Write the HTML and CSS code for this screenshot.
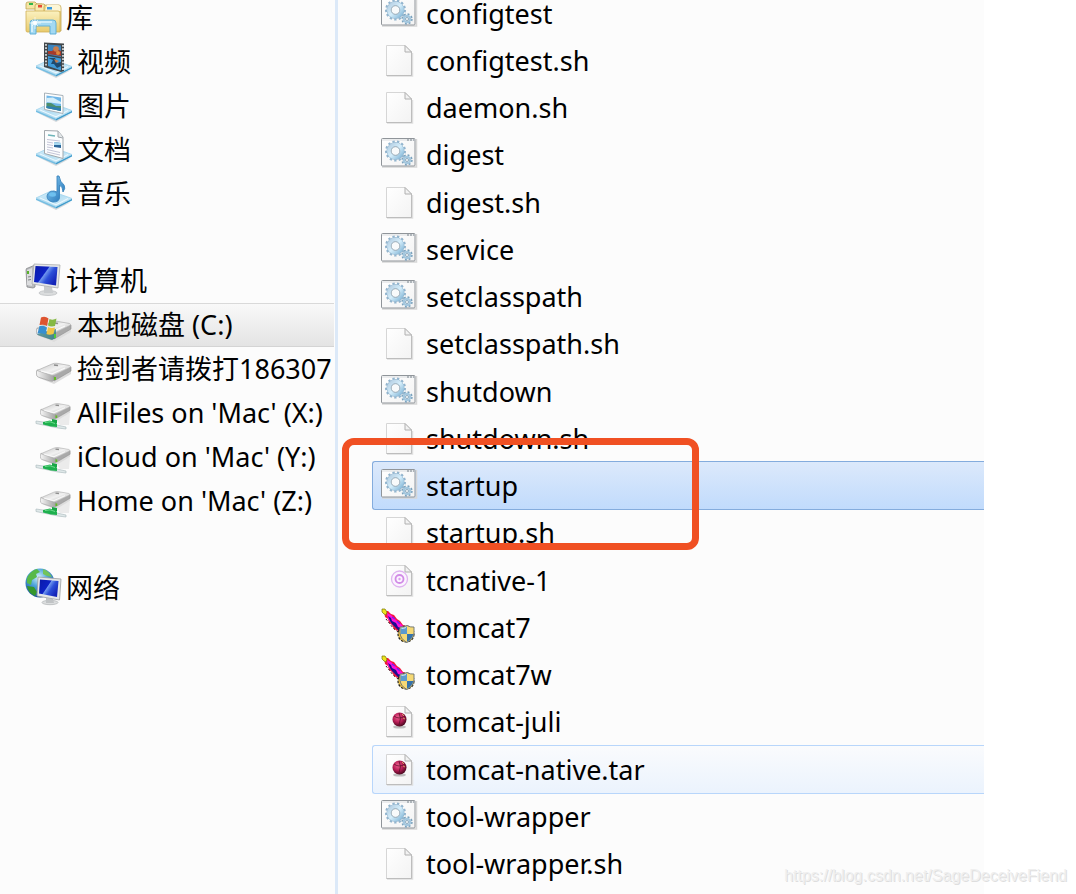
FILE: index.html
```html
<!DOCTYPE html>
<html lang="zh-CN">
    <head>
        <meta charset="utf-8">
        <title>bin</title>
        <link rel="stylesheet" href="styles.css">
    </head>
    <body>
        <!-- shared icon shapes -->
        <svg class="defs" aria-hidden="true">
            <defs>
                <linearGradient id="paper" x1="0" y1="0" x2="1" y2="1">
                    <stop offset="0" stop-color="#ffffff"/>
                    <stop offset="1" stop-color="#f3f3f3"/>
                </linearGradient>
                <linearGradient id="gearFill" x1="0" y1="0" x2="1" y2="1">
                    <stop offset="0" stop-color="#b5cfe3"/>
                    <stop offset="0.5" stop-color="#d5eefb"/>
                    <stop offset="1" stop-color="#86b8d8"/>
                </linearGradient>
                <linearGradient id="trayFill" x1="0" y1="0" x2="1" y2="1">
                    <stop offset="0" stop-color="#d9effa"/>
                    <stop offset="0.5" stop-color="#b4def3"/>
                    <stop offset="1" stop-color="#e3f5fc"/>
                </linearGradient>
                <linearGradient id="folderFill" x1="0" y1="0" x2="0" y2="1">
                    <stop offset="0" stop-color="#fbf1c0"/>
                    <stop offset="1" stop-color="#e9cb6c"/>
                </linearGradient>
                <linearGradient id="screenFill" x1="0" y1="0" x2="1" y2="0.6">
                    <stop offset="0" stop-color="#0a1aa8"/>
                    <stop offset="0.48" stop-color="#0d22c4"/>
                    <stop offset="0.52" stop-color="#6f95ee"/>
                    <stop offset="0.7" stop-color="#2c4fd8"/>
                    <stop offset="1" stop-color="#1424b8"/>
                </linearGradient>
                <linearGradient id="metalTop" x1="0" y1="0" x2="1" y2="1">
                    <stop offset="0" stop-color="#c4c4c4"/>
                    <stop offset="0.5" stop-color="#f1f1f1"/>
                    <stop offset="1" stop-color="#adadad"/>
                </linearGradient>
                <linearGradient id="metalSide" x1="0" y1="0" x2="1" y2="0">
                    <stop offset="0" stop-color="#f6f6f6"/>
                    <stop offset="1" stop-color="#a2a2a2"/>
                </linearGradient>
                <linearGradient id="noteFill" x1="0" y1="0" x2="1" y2="1">
                    <stop offset="0" stop-color="#8fd0f5"/>
                    <stop offset="1" stop-color="#1c6fb5"/>
                </linearGradient>
                <radialGradient id="globeFill" cx="0.45" cy="0.3" r="0.7">
                    <stop offset="0" stop-color="#d5f3fb"/>
                    <stop offset="0.45" stop-color="#4da3d9"/>
                    <stop offset="1" stop-color="#174f9e"/>
                </radialGradient>
                <radialGradient id="ballFill" cx="0.4" cy="0.35" r="0.7">
                    <stop offset="0" stop-color="#ee5f90"/>
                    <stop offset="0.5" stop-color="#b81d56"/>
                    <stop offset="1" stop-color="#3d0719"/>
                </radialGradient>
            </defs>

            <symbol id="page" viewBox="0 0 36 36">
                <path d="M6 35H31.500V12" fill="none" stroke="#dedede" stroke-width="1.5"/>
                <path d="M5.500 4.500H24L30.500 11V34.500H5.500Z" fill="url(#paper)" stroke="#d6d6d6"/>
                <path d="M30.500 11V34.500H5.500" fill="none" stroke="#bdbdbd"/>
                <path d="M24 4.500V11H30.500Z" fill="#f2f2f2" stroke="#b0b0b0"/>
            </symbol>

            <symbol id="batch" viewBox="0 0 36 36">
                <path d="M1 32H35.500V4" fill="none" stroke="#d6d6d6" stroke-width="1.500"/>
                <rect x="0.500" y="3.500" width="33.500" height="27.500" rx="1" fill="url(#paper)" stroke="#90959a"/>
                <path d="M1 5H34" stroke="#d9dcdf"/>
                <path d="M26 5h2M29 5h2M32 5h1.500" stroke="#76818a"/>
                <circle cx="14.500" cy="16" r="9.300" fill="none" stroke="#93b5ce" stroke-width="2.400" stroke-dasharray="2.300 2.200"/>
                <circle cx="14.500" cy="16" r="6.500" fill="none" stroke="#93b5ce" stroke-width="5"/>
                <circle cx="14.500" cy="16" r="6.500" fill="none" stroke="url(#gearFill)" stroke-width="4"/>
                <circle cx="14.500" cy="16" r="4.300" fill="#f8fafb" stroke="#9aaab6" stroke-width="0.900"/>
                <circle cx="26" cy="25" r="4.800" fill="none" stroke="#7ba2bd" stroke-width="1.800" stroke-dasharray="1.900 1.870"/>
                <circle cx="26" cy="25" r="3.200" fill="#f7fbfe" stroke="#a4c7de" stroke-width="2.300"/>
                <circle cx="26" cy="25" r="1.500" fill="#ffffff" stroke="#7397ae" stroke-width="0.800"/>
            </symbol>

            <symbol id="dll" viewBox="0 0 36 36">
                <use href="#page"/>
                <circle cx="18.500" cy="18" r="8" fill="#fbf4fe" stroke="#dfb3f0" stroke-width="1.300"/>
                <circle cx="18.500" cy="18" r="4" fill="none" stroke="#d18be6" stroke-width="1.800"/>
                <circle cx="18.500" cy="18" r="1.200" fill="#dba0ee"/>
            </symbol>

            <symbol id="jar" viewBox="0 0 36 36">
                <use href="#page"/>
                <ellipse cx="18.500" cy="25" rx="6.500" ry="1.600" fill="#bdbdbd"/>
                <circle cx="18.500" cy="17.500" r="7" fill="url(#ballFill)"/>
                <path d="M13 14Q18 18 24 14M18 11Q21 16 18 23" fill="none" stroke="#5b1029" stroke-width="0.800"/>
                <path d="M21 12l2 2M22 16l2 1" stroke="#d99a62"/>
            </symbol>

            <symbol id="feather" viewBox="0 0 36 36">
                <path d="M3 3L7 3L10 6L13 7L16 11L19 13L22 17L25 18L26 25L19 27L17 23L13 21L11 17L8 15L7 11L4 9Z" fill="#f5173c"/>
                <path d="M6 5L10 7L15 12L19 15L24 20L21 24L16 20L11 16L7 11Z" fill="#ff0edb"/>
                <path d="M7 8L10 10L11 13L15 15L17 19L20 20L22 24L18 23L15 20L11 16L9 13Z" fill="#1d0c8e"/>
                <path d="M11 9L14 11M16 13L19 16" stroke="#7c1bf2" stroke-width="1.500"/>
                <path d="M5 11L9 16L12 20L17 24" fill="none" stroke="#31121e" stroke-width="1" stroke-dasharray="2 2"/>
                <path d="M1 1H4L6 4L5 7L3 6L1 4Z" fill="#ece41c" stroke="#77720a" stroke-width="0.700"/>
                <circle cx="25" cy="26" r="8" fill="#e9bf45" stroke="#26261c" stroke-width="1.200" stroke-dasharray="2.500 1.300"/>
                <path d="M26 17.500Q29.500 19.500 33 19V25Q32.500 31 26 34.500Q19.500 31 19 25V19Q22.500 19.500 26 17.500Z" fill="#f6d975" stroke="#6a7274" stroke-width="0.900"/>
                <path d="M26 18.500V26H19.600V19.800Q23 20 26 18.500Z" fill="#5c9ace"/>
                <path d="M26 26H32.300Q31.500 31 26 33.700Z" fill="#3572ab"/>
                <path d="M20.500 20.500Q23 20.500 25 19.500" fill="none" stroke="#cbe4f5"/>
            </symbol>

            <symbol id="tray" viewBox="0 0 36 36">
                <path d="M2 25L20 34L35 26L20 31Z" fill="#d4d8db"/>
                <path d="M0 22L20 30.500V32.500L0 24Z" fill="#74bde2"/>
                <path d="M20 30.500L36 22.500V24.500L20 32.500Z" fill="#3f9bcb"/>
                <path d="M0 22L15 15L36 22.500L20 30.500Z" fill="url(#trayFill)" stroke="#9fd3ec" stroke-width="0.800"/>
                <path d="M4 22L20 28.800L32 22.500" fill="none" stroke="#eef9ff"/>
            </symbol>

            <symbol id="libraries" viewBox="0 0 36 36">
                <path d="M1 4Q1 2 3 2H10L12 4H17V9H1Z" fill="#f5e5a3" stroke="#bfa252" stroke-width="0.800"/>
                <path d="M10 6Q10 4 12 4H19L21 6H27V12H10Z" fill="#f8eab0" stroke="#bfa252" stroke-width="0.800"/>
                <path d="M19 7Q19 5 21 5H34Q36 5 36 8V31H19Z" fill="#efd989" stroke="#bfa252" stroke-width="0.800"/>
                <path d="M22 5H33Q35.500 5 35.500 8V11H20Z" fill="#fdf6d6"/>
                <rect x="4" y="3" width="4" height="2" fill="#2eb64c"/>
                <rect x="13" y="5" width="4" height="2.500" fill="#e84a35"/>
                <rect x="22" y="7" width="5" height="2.500" fill="#3a9be0"/>
                <path d="M1 11H33Q35 11 35 13V32H2Q1 32 1 30Z" fill="url(#folderFill)" stroke="#cfae56" stroke-width="0.800"/>
                <path d="M5 34V23Q5 20 8 20H28Q31 20 31 23V34H25V26H11V34Z" fill="#a3d9f2" stroke="#5aacd5" stroke-width="0.900"/>
                <path d="M7 32V23.500Q7 22 9 22H27" fill="none" stroke="#def4fd" stroke-width="1.600"/>
                <path d="M10 17V29M4 23H16M7 20L13 26M7 26L13 20" stroke="#ffffff" stroke-width="0.900" opacity="0.700"/>
                <circle cx="10" cy="23" r="2" fill="#ffffff"/>
            </symbol>

            <symbol id="video" viewBox="0 0 36 36">
                <use href="#tray"/>
                <path d="M8 -1.500L28 -0.500V27L25 28L8 23Z" fill="#41474b"/>
                <path d="M12 0.500L25 1.500V13L12 10.500Z" fill="#3d84bd"/>
                <path d="M12 12L25 14.500V26.500L12 22Z" fill="#3f9ad8"/>
                <path d="M12 7L16 7L19 4L25 7V12L12 10Z" fill="#a63b2c"/>
                <circle cx="20" cy="5" r="2.800" fill="#c97c4a"/>
                <circle cx="22" cy="9" r="2" fill="#e08a3c"/>
                <path d="M12 14L17 16L15 20L18 20L21 24L25 22V18L21 19L19 14Z" fill="#1f4a6e"/>
                <path d="M18 15L23 17L20 19Z" fill="#c97c4a"/>
                <path d="M10 0V23M27 1V27" stroke="#f4f6f6" stroke-width="1.500" stroke-dasharray="1.800 1.500"/>
            </symbol>

            <symbol id="pictures" viewBox="0 0 36 36">
                <use href="#tray"/>
                <path d="M8.500 5L27 7.500V25.500L8.500 21.500Z" fill="#fcfdfe" stroke="#a8b2b9"/>
                <path d="M10.500 7.500L25 9.500V23L10.500 20Z" fill="#6fb6e8"/>
                <path d="M10.500 10L17 9.500L25 14V16L10.500 14Z" fill="#d4eefa"/>
                <path d="M10.500 15L15 15L20 18L25 18V23L10.500 20Z" fill="#4c8f6c"/>
                <path d="M10.500 18L18 19L25 20V23L10.500 20Z" fill="#2f7fb2"/>
            </symbol>

            <symbol id="documents" viewBox="0 0 36 36">
                <use href="#tray"/>
                <path d="M8.500 -1.500L22 -1L27 5V26.500L8.500 21.500Z" fill="#fcfdfe" stroke="#a2a8ad"/>
                <path d="M22 -1V5L27 6" fill="#e3e7e9" stroke="#a2a8ad"/>
                <path d="M12 3L19 4" stroke="#6fb5b9" stroke-width="1.500"/>
                <path d="M11 7.500L24 9M11 10L17 11M11 12.500L17 13.500M11 15L17 16M11 17.500L24 20.500M11 20L24 23" stroke="#c4c5d8" stroke-width="1"/>
                <path d="M18 10L25 11V16L18 15Z" fill="#2c679a"/>
                <path d="M18 10L25 11V13L18 13Z" fill="#a8d9ef"/>
            </symbol>

            <symbol id="music" viewBox="0 0 36 36">
                <use href="#tray"/>
                <path d="M21 0H23Q24 6 28 9Q30 12 27 16Q27 11 23.500 9V22Q23 26 17 26Q11 25 11 20Q12 15 18 15L21 16Z" fill="url(#noteFill)" stroke="#3a85bd" stroke-width="0.900"/>
                <ellipse cx="16.500" cy="18.500" rx="3.500" ry="2.200" fill="#6ec0ef"/>
            </symbol>

            <symbol id="computer" viewBox="0 0 36 36">
                <path d="M1 7Q1 5 3 5L10 2V24L8 25L2 24Z" fill="#b9bbbd" stroke="#85878a" stroke-width="0.800"/>
                <path d="M2 7L7 5V23L2 22Z" fill="#dcdddf"/>
                <path d="M3 14L6 13.500M3 17L6 16.500" stroke="#7f8486"/>
                <rect x="2" y="8" width="2" height="3" fill="#59b32b"/>
                <ellipse cx="23" cy="30" rx="9" ry="2.500" fill="#dadcdd" stroke="#b9bcbe" stroke-width="0.700"/>
                <path d="M19 23L27 24L28 30H19Z" fill="#c9ccce"/>
                <path d="M9 1L35 2L33 25L7 21Z" fill="#e4e6e7" stroke="#a9acaf" stroke-width="0.800"/>
                <path d="M10.500 3L32.500 4L31 22.500L9 19Z" fill="url(#screenFill)"/>
            </symbol>

            <symbol id="drive" viewBox="0 0 36 36">
                <path d="M3 27L18 33L35 23V20Z" fill="#dddddd"/>
                <path d="M0.500 20Q0.500 19 2 19L18 24V29Q17 31 14 30L2 26Q0.500 25.500 0.500 23Z" fill="url(#metalSide)" stroke="#a0a0a0" stroke-width="0.700"/>
                <path d="M18 24L35 16V20L18 30Z" fill="#a9a9a9" stroke="#8f8f8f" stroke-width="0.600"/>
                <path d="M1 19.500L16 13Q18 12 21 12.300L33.500 14.500Q35.500 15.300 34 16.500L19 24Q17 25 15 24.200Z" fill="url(#metalTop)" stroke="#adadad" stroke-width="0.700"/>
                <path d="M5 20L16 22.800L29 17" fill="none" stroke="#fafafa" stroke-width="1.200"/>
                <path d="M18 14l4 0.500" stroke="#8c8c8c" stroke-width="1.500"/>
                <rect x="18" y="26" width="2" height="3" fill="#62bd23"/>
            </symbol>

            <symbol id="systemDrive" viewBox="0 0 36 36">
                <use href="#drive" y="2"/>
                <path d="M1 27L12 24L20 22V31L16 33L2 28Z" fill="#2b7c84" opacity="0.750"/>
                <path d="M5 10.500Q9 8.500 12.500 11.500L11 19Q8 17 3.500 18Z" fill="#dd5430"/>
                <path d="M13.500 12Q17 13.500 20.500 11.500L19 19Q15 20 12 18.500Z" fill="#86b944"/>
                <path d="M3.500 19Q8 18 11 20.500L9.500 27.500Q6 25.500 1.500 26.500Z" fill="#378fd0"/>
                <path d="M12 20Q15 21.500 19 20.500L17.500 27Q13 28.500 10.500 27Z" fill="#f2c546"/>
                <rect x="18" y="27" width="2" height="4" fill="#4fcb3b"/>
            </symbol>

            <symbol id="netDrive" viewBox="0 0 36 36">
                <path d="M20 24L34 18L33 30L24 30Z" fill="#ebebeb"/>
                <svg x="4" y="-2" width="31" height="31" viewBox="0 0 36 36"><use href="#drive"/></svg>
                <path d="M16 24L21 25V28L16 28Z" fill="#18a647"/>
                <path d="M0 26L7 27L30 32V34L22 33L0 28.500Z" fill="#dfe8e9" stroke="#b0bfc1" stroke-width="0.700"/>
                <path d="M7 27L14 25.500L21 28.500V32L15 31.500L7 29.500Z" fill="#1eb04e"/>
                <path d="M9 27.500L14 26.800L19 28.500" fill="none" stroke="#6cd98b"/>
            </symbol>

            <symbol id="network" viewBox="0 0 36 36">
                <circle cx="15" cy="13" r="14.500" fill="url(#globeFill)"/>
                <path d="M3 6Q7 0 12 -1L15 2L11 4L12 7L7 10L6 15L2 13Q1 9 3 6Z" fill="#58b948"/>
                <path d="M18 -1Q24 1 27 7L22 6L18 4Z" fill="#73c45a"/>
                <path d="M2 16L9 17L12 22L10 26Q3 23 2 16Z" fill="#35962c"/>
                <ellipse cx="25" cy="32.500" rx="8" ry="2.200" fill="#dcdedf" stroke="#aeb1b3" stroke-width="0.700"/>
                <path d="M21 28L28 29L29 33H21Z" fill="#c0c3c5"/>
                <path d="M13 7L36 9L34.500 30L12 26Z" fill="#e5e7e8" stroke="#9a9ea1" stroke-width="0.800"/>
                <path d="M15 9.500L33.500 11L32 27L14 23.500Z" fill="url(#screenFill)"/>
            </symbol>
        </svg>

        <div class="explorer">
            <nav class="sidebar">
                <ul class="tree">
                    <li><a href="#"><svg class="icon"><use href="#libraries"/></svg>库</a></li>
                    <li class="child"><a href="#"><svg class="icon"><use href="#video"/></svg>视频</a></li>
                    <li class="child"><a href="#"><svg class="icon"><use href="#pictures"/></svg>图片</a></li>
                    <li class="child"><a href="#"><svg class="icon"><use href="#documents"/></svg>文档</a></li>
                    <li class="child"><a href="#"><svg class="icon"><use href="#music"/></svg>音乐</a></li>
                </ul>
                <ul class="tree">
                    <li><a href="#"><svg class="icon"><use href="#computer"/></svg>计算机</a></li>
                    <li class="child current"><a href="#"><svg class="icon"><use href="#systemDrive"/></svg>本地磁盘 (C:)</a></li>
                    <li class="child"><a href="#"><svg class="icon"><use href="#drive"/></svg>捡到者请拨打186307</a></li>
                    <li class="child"><a href="#"><svg class="icon"><use href="#netDrive"/></svg>AllFiles on 'Mac' (X:)</a></li>
                    <li class="child"><a href="#"><svg class="icon"><use href="#netDrive"/></svg>iCloud on 'Mac' (Y:)</a></li>
                    <li class="child"><a href="#"><svg class="icon"><use href="#netDrive"/></svg>Home on 'Mac' (Z:)</a></li>
                </ul>
                <ul class="tree">
                    <li><a href="#"><svg class="icon"><use href="#network"/></svg>网络</a></li>
                </ul>
            </nav>

            <main class="files">
                <ul class="fileList">
                    <li><a href="#"><svg class="icon"><use href="#batch"/></svg>configtest</a></li>
                    <li><a href="#"><svg class="icon"><use href="#page"/></svg>configtest.sh</a></li>
                    <li><a href="#"><svg class="icon"><use href="#page"/></svg>daemon.sh</a></li>
                    <li><a href="#"><svg class="icon"><use href="#batch"/></svg>digest</a></li>
                    <li><a href="#"><svg class="icon"><use href="#page"/></svg>digest.sh</a></li>
                    <li><a href="#"><svg class="icon"><use href="#batch"/></svg>service</a></li>
                    <li><a href="#"><svg class="icon"><use href="#batch"/></svg>setclasspath</a></li>
                    <li><a href="#"><svg class="icon"><use href="#page"/></svg>setclasspath.sh</a></li>
                    <li><a href="#"><svg class="icon"><use href="#batch"/></svg>shutdown</a></li>
                    <li><a href="#"><svg class="icon"><use href="#page"/></svg>shutdown.sh</a></li>
                    <li class="selected"><a href="#"><svg class="icon"><use href="#batch"/></svg>startup</a></li>
                    <li><a href="#"><svg class="icon"><use href="#page"/></svg>startup.sh</a></li>
                    <li><a href="#"><svg class="icon"><use href="#dll"/></svg>tcnative-1</a></li>
                    <li><a href="#"><svg class="icon"><use href="#feather"/></svg>tomcat7</a></li>
                    <li><a href="#"><svg class="icon"><use href="#feather"/></svg>tomcat7w</a></li>
                    <li><a href="#"><svg class="icon"><use href="#jar"/></svg>tomcat-juli</a></li>
                    <li class="hovered"><a href="#"><svg class="icon"><use href="#jar"/></svg>tomcat-native.tar</a></li>
                    <li><a href="#"><svg class="icon"><use href="#batch"/></svg>tool-wrapper</a></li>
                    <li><a href="#"><svg class="icon"><use href="#page"/></svg>tool-wrapper.sh</a></li>
                </ul>
                <div class="marker"></div>
            </main>
        </div>
        <a class="watermark" href="#">https://blog.csdn.net/SageDeceiveFiend</a>
    </body>
</html>
```
FILE: styles.css
```css
body {
    margin: 0;
    background-color: #ffffff;
    color: #000000;
    font-family: "Noto Sans", "Noto Sans CJK SC", sans-serif;
    font-size: 27px;
    line-height: 36px;
}
ul {
    list-style: none;
    margin: 0;
    padding: 0;
}
a {
    color: inherit;
    text-decoration: none;
}
.defs {
    position: absolute;
    width: 0;
    height: 0;
}
symbol {
    overflow: visible;
}
.icon {
    flex: none;
    width: 36px;
    height: 36px;
    overflow: visible;
}
.explorer {
    display: flex;
    min-height: 100vh;
    margin-right: 92px;
    background-color: #fcfcfc;
}

/* navigation tree */
.sidebar {
    flex: none;
    box-sizing: border-box;
    width: 338px;
    padding-right: 1px;
    overflow: hidden;
    border-right: 3px solid #dce9f8;
}
.tree {
    margin-bottom: 43px;
}
.tree:first-child {
    margin-top: -4px;
}
.tree a {
    display: flex;
    align-items: center;
    gap: 5px;
    box-sizing: border-box;
    height: 44px;
    padding-left: 25px;
    white-space: nowrap;
}
.tree .child a {
    padding-left: 36px;
}
.tree .current a {
    border-top: 1px solid #d9d9d9;
    border-bottom: 1px solid #d4d4d4;
    background: linear-gradient(#f9f9f9, #e4e4e4);
}

/* file list */
.files {
    position: relative;
    flex: 1;
    min-width: 0;
    overflow: hidden;
}
.fileList {
    margin-top: -10px;
    margin-left: 34px;
}
.fileList a {
    display: flex;
    align-items: center;
    gap: 9px;
    box-sizing: border-box;
    height: 47px;
    padding-left: 9px;
    white-space: nowrap;
}
.fileList .icon {
    margin-bottom: 3px;
}
.fileList li:nth-child(4n) {
    margin-bottom: 1px;
}
.fileList .selected a,
.fileList .hovered a {
    height: 49px;
    margin: -1px 0;
    padding-left: 8px;
    border: 1px solid #84acdd;
    border-right: 0;
    border-radius: 3px 0 0 3px;
}
.fileList .selected a {
    background: linear-gradient(#dce9fb, #c1dbfc);
}
.fileList .hovered a {
    border-color: #b8d6fb;
    background: linear-gradient(#fafbfd, #ebf3fd);
}
.marker {
    position: absolute;
    top: 438px;
    left: 4px;
    box-sizing: border-box;
    width: 357px;
    height: 112px;
    border: 7px solid #f05023;
    border-radius: 12px;
}
.watermark {
    position: absolute;
    right: 9px;
    bottom: 8px;
    color: #efefef;
    font-family: "Liberation Sans", sans-serif;
    font-size: 16px;
    line-height: 20px;
    text-shadow: 1px 1px 0 #dedede;
}
```
